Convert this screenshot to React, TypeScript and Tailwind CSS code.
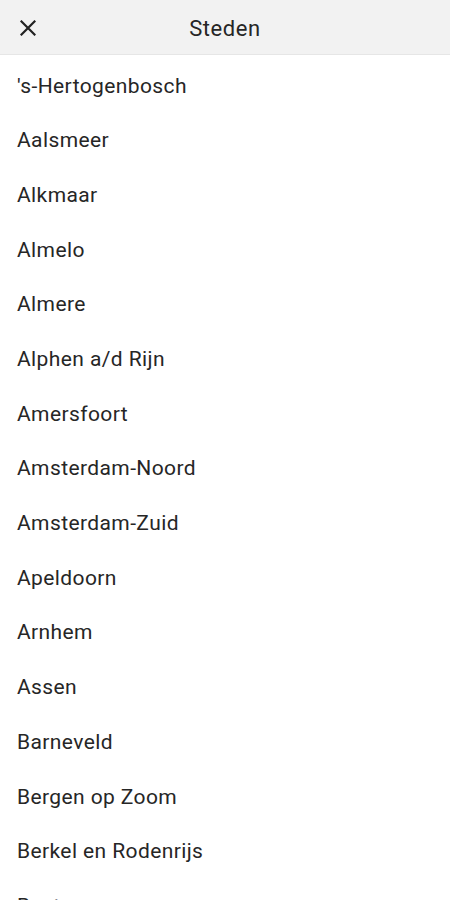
const steden = [
  "'s-Hertogenbosch",
  "Aalsmeer",
  "Alkmaar",
  "Almelo",
  "Almere",
  "Alphen a/d Rijn",
  "Amersfoort",
  "Amsterdam-Noord",
  "Amsterdam-Zuid",
  "Apeldoorn",
  "Arnhem",
  "Assen",
  "Barneveld",
  "Bergen op Zoom",
  "Berkel en Rodenrijs",
  "Best",
  "Beverwijk",
]

export default function App() {
  return (
    <div className="h-[900px] w-[450px] overflow-hidden bg-white font-['Roboto',sans-serif] text-[#262626]">
      {/* Header */}
      <div className="relative flex h-[55px] items-center justify-center border-b border-[#e6e6e6] bg-[#f2f2f2]">
        <button className="absolute left-[20px] top-[20px] text-[#222]">
          <svg width="16" height="16" viewBox="0 0 16 16" fill="none" stroke="currentColor" strokeWidth="2.2" strokeLinecap="square">
            <path d="M1.5 1.5 L14.5 14.5 M14.5 1.5 L1.5 14.5" />
          </svg>
        </button>
        <h1 className="pt-[3px] text-[22px] tracking-[0.6px]">Steden</h1>
      </div>

      {/* Lijst */}
      <ul className="pt-[4px]">
        {steden.map((stad) => (
          <li key={stad} className="flex h-[54.7px] items-center px-[17px] text-[21px] tracking-[0.4px]">
            {stad}
          </li>
        ))}
      </ul>
    </div>
  )
}
